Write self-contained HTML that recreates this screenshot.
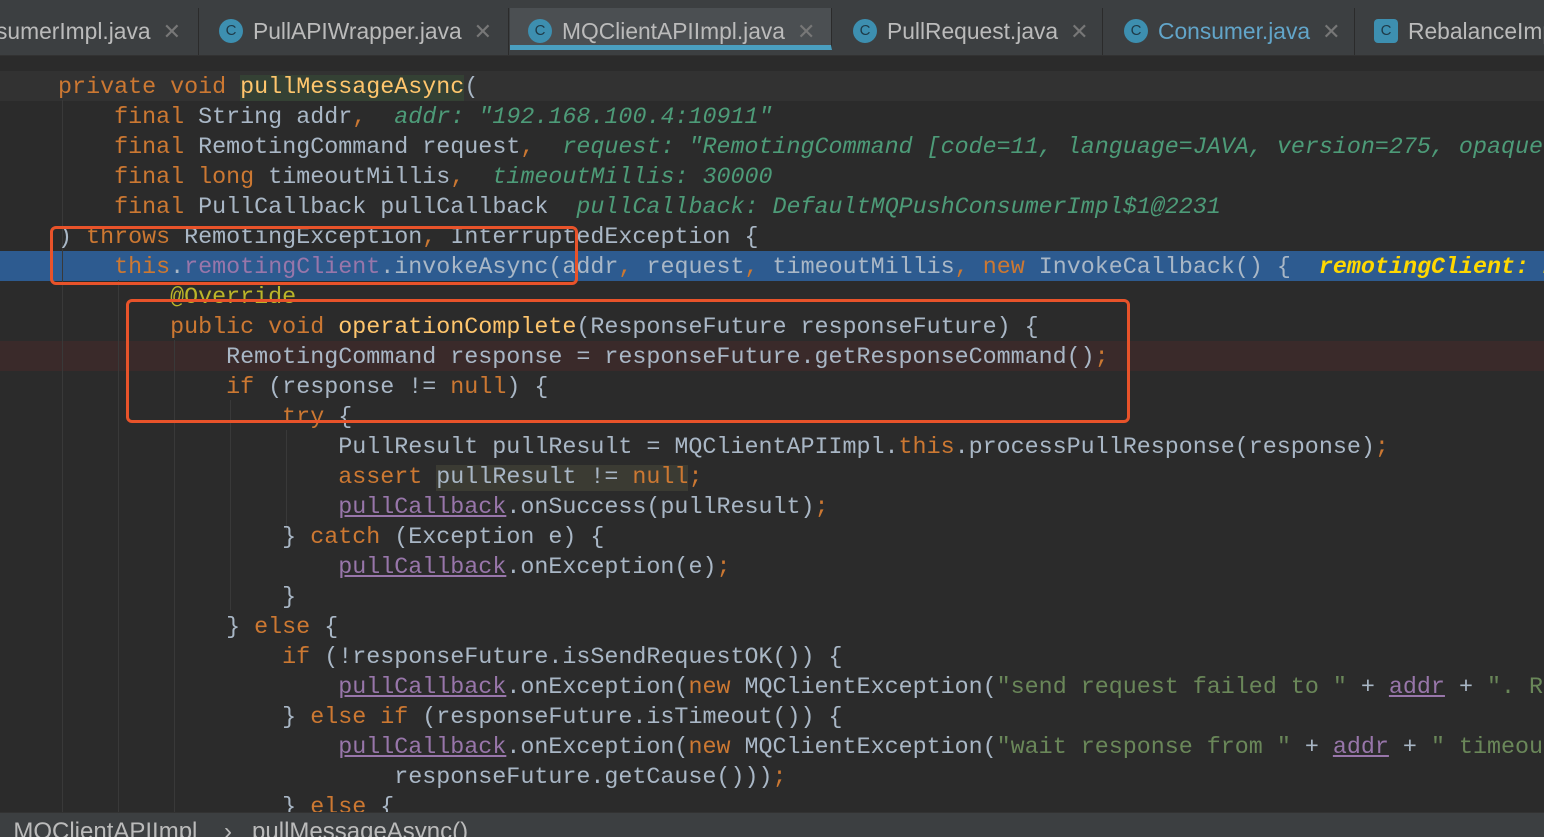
<!DOCTYPE html>
<html><head><meta charset="utf-8"><style>
body{margin:0;width:1544px;height:836px;overflow:hidden;background:#2b2b2b;position:relative;font-family:"Liberation Mono",monospace}
.tabs{position:absolute;left:0;top:0;width:1544px;height:55px;background:#3c3f41;border-bottom:1px solid #323232}
.tab{position:absolute;top:8px;height:47px;font-family:"Liberation Sans",sans-serif;font-size:22.8px;color:#bbbbbb;line-height:47px;white-space:nowrap;border-right:1px solid #2b2b2b}
.ic{display:inline-block;width:24px;height:24px;border-radius:50%;background:#3d8fb0;color:#1e3a48;font-size:15px;line-height:24px;text-align:center;vertical-align:middle;margin-right:10px;margin-top:-4px}
.x{color:#777;margin-left:12px;font-size:22px}
.row{position:absolute;left:2px;height:30px;line-height:35px;font-size:23.35px;white-space:pre;color:#a9b7c6}
.k{color:#cc7832}.m{color:#ffc66d}.f{color:#9876aa}.s{color:#6a8759}.a{color:#bbb529}
.h{color:#4d9b78;font-style:italic}.u{text-decoration:underline}
.bg{position:absolute;left:0;width:1544px;height:30px}
.box{position:absolute;border:3px solid #e8532a;border-radius:6px}
.g{position:absolute;width:1px;background:#393939}
.bot{position:absolute;left:0;top:812px;width:1544px;height:24px;background:#3c3f41;border-top:1px solid #323232;font-family:"Liberation Sans",sans-serif;font-size:24px;color:#bbb;line-height:38px;white-space:pre;overflow:hidden}
</style></head><body>
<div class="tabs">
<div class="tab" style="left:0;width:198px;padding-left:0"><span style="margin-left:-4px">sumerImpl.java</span><span class="x">✕</span></div>
<div class="tab" style="left:199px;width:310px;padding-left:20px;box-sizing:border-box"><span class="ic">C</span>PullAPIWrapper.java<span class="x">✕</span></div>
<div class="tab" style="left:510px;width:322px;padding-left:18px;box-sizing:border-box;background:#4b4f52;border-bottom:5px solid #4a9fc0;height:42px;line-height:47px"><span class="ic">C</span>MQClientAPIImpl.java<span class="x">✕</span></div>
<div class="tab" style="left:833px;width:270px;padding-left:20px;box-sizing:border-box"><span class="ic">C</span>PullRequest.java<span class="x">✕</span></div>
<div class="tab" style="left:1104px;width:251px;padding-left:20px;box-sizing:border-box"><span class="ic">C</span><span style="color:#62a5c9">Consumer.java</span><span class="x">✕</span></div>
<div class="tab" style="left:1356px;width:200px;padding-left:18px;box-sizing:border-box;border:none"><span class="ic" style="border-radius:4px">C</span>RebalanceImp</div>
</div>
<div class="bg" style="top:71px;background:#323232"></div>
<div class="bg" style="top:251px;background:#2d5b90"></div>
<div class="bg" style="top:341px;background:#3a2a2a"></div>
<div class="g" style="left:62px;top:100px;height:712px"></div>
<div class="g" style="left:118px;top:280px;height:532px"></div>
<div class="g" style="left:174px;top:340px;height:472px"></div>
<div class="g" style="left:230px;top:400px;height:210px"></div>
<div class="g" style="left:286px;top:430px;height:100px"></div>
<div class="row" style="top:71px">    <span class="k">private void </span><span class="m" style="background:#344134">pullMessageAsync</span>(</div>
<div class="row" style="top:101px">        <span class="k">final </span>String addr<span class="k">,</span>  <span class="h">addr: "192.168.100.4:10911"</span></div>
<div class="row" style="top:131px">        <span class="k">final </span>RemotingCommand request<span class="k">,</span>  <span class="h">request: "RemotingCommand [code=11, language=JAVA, version=275, opaque=</span></div>
<div class="row" style="top:161px">        <span class="k">final long </span>timeoutMillis<span class="k">,</span>  <span class="h">timeoutMillis: 30000</span></div>
<div class="row" style="top:191px">        <span class="k">final </span>PullCallback pullCallback  <span class="h">pullCallback: DefaultMQPushConsumerImpl$1@2231</span></div>
<div class="row" style="top:221px">    ) <span class="k">throws </span>RemotingException<span class="k">, </span>InterruptedException {</div>
<div class="row" style="top:251px">        <span class="k">this</span>.<span class="f">remotingClient</span>.invokeAsync(addr<span class="k">, </span>request<span class="k">, </span>timeoutMillis<span class="k">, new </span>InvokeCallback() {  <span style="color:#ffd800;font-style:italic;font-weight:bold">remotingClient: N</span></div>
<div class="row" style="top:281px">            <span class="a">@Override</span></div>
<div class="row" style="top:311px">            <span class="k">public void </span><span class="m">operationComplete</span>(ResponseFuture responseFuture) {</div>
<div class="row" style="top:341px">                RemotingCommand response = responseFuture.getResponseCommand()<span class="k">;</span></div>
<div class="row" style="top:371px">                <span class="k">if </span>(response != <span class="k">null</span>) {</div>
<div class="row" style="top:401px">                    <span class="k">try </span>{</div>
<div class="row" style="top:431px">                        PullResult pullResult = MQClientAPIImpl.<span class="k">this</span>.processPullResponse(response)<span class="k">;</span></div>
<div class="row" style="top:461px">                        <span class="k">assert </span><span style="background:#3b3b33">pullResult != <span class="k">null</span></span><span class="k">;</span></div>
<div class="row" style="top:491px">                        <span class="f u">pullCallback</span>.onSuccess(pullResult)<span class="k">;</span></div>
<div class="row" style="top:521px">                    } <span class="k">catch </span>(Exception e) {</div>
<div class="row" style="top:551px">                        <span class="f u">pullCallback</span>.onException(e)<span class="k">;</span></div>
<div class="row" style="top:581px">                    }</div>
<div class="row" style="top:611px">                } <span class="k">else </span>{</div>
<div class="row" style="top:641px">                    <span class="k">if </span>(!responseFuture.isSendRequestOK()) {</div>
<div class="row" style="top:671px">                        <span class="f u">pullCallback</span>.onException(<span class="k">new </span>MQClientException(<span class="s">"send request failed to "</span> + <span class="f u">addr</span> + <span class="s">". R</span></div>
<div class="row" style="top:701px">                    } <span class="k">else if </span>(responseFuture.isTimeout()) {</div>
<div class="row" style="top:731px">                        <span class="f u">pullCallback</span>.onException(<span class="k">new </span>MQClientException(<span class="s">"wait response from "</span> + <span class="f u">addr</span> + <span class="s">" timeou</span></div>
<div class="row" style="top:761px">                            responseFuture.getCause()))<span class="k">;</span></div>
<div class="row" style="top:791px">                    } <span class="k">else </span>{</div>
<div class="box" style="left:50px;top:226px;width:522px;height:53px"></div>
<div class="box" style="left:126px;top:299px;width:998px;height:118px"></div>
<div class="bot">  MQClientAPIImpl    ›   pullMessageAsync()</div>
</body></html>
